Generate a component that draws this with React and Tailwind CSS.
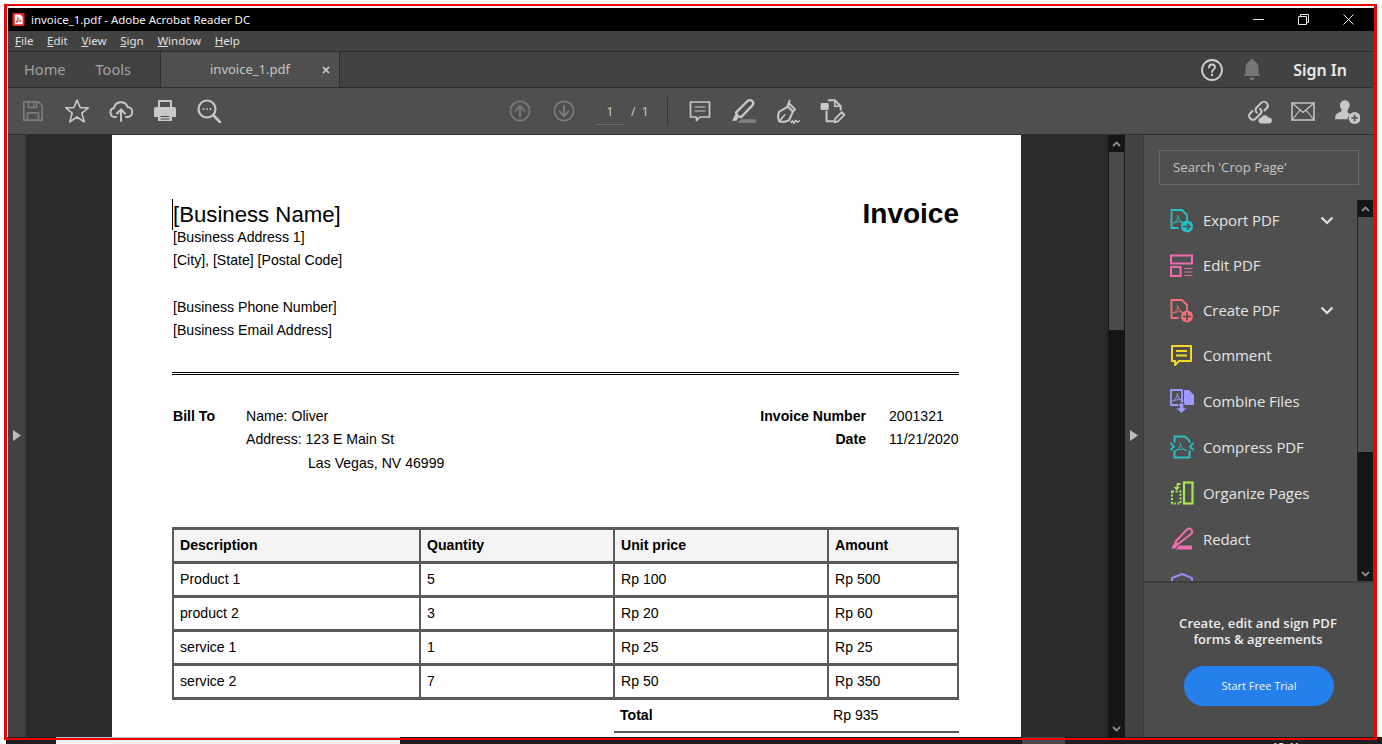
import React from 'react';

function Ico({ size = 24, className = '', children }) {
  return (
    <svg width={size} height={size} viewBox="0 0 24 24" fill="none" stroke="currentColor" strokeWidth="2" strokeLinejoin="round" strokeLinecap="round" className={className}>
      {children}
    </svg>
  );
}

const squiggle = 'M7.5 6.5c1 4 2.5 6 6 7.5M3.5 14c2-1 4-3.5 4.5-6M3.5 14c3-1.5 7-2 10-.5';

const toolIcons = {
  export: (
    <Ico className="text-[#27c0c8]">
      <path d="M8 19H1.5V1H12l5 5v5" strokeWidth="1.8" />
      <path d={squiggle} strokeWidth="1" />
      <circle cx="17" cy="17.5" r="6" fill="currentColor" stroke="none" />
      <path d="M13.5 17.5h6M17.5 15l2.5 2.5-2.5 2.5" stroke="#4f4f4f" strokeWidth="1.6" />
    </Ico>
  ),
  edit: (
    <Ico className="text-[#f06cb0]">
      <rect x="1" y="1.5" width="21" height="8" strokeWidth="2" strokeLinejoin="miter" />
      <rect x="1" y="13" width="9.5" height="9" strokeWidth="2" strokeLinejoin="miter" />
      <path d="M14.5 14.5h8M14.5 18h8M14.5 21.5h8" strokeWidth="1" strokeLinecap="butt" />
    </Ico>
  ),
  create: (
    <Ico className="text-[#f4707a]">
      <path d="M8 19H1.5V1H12l5 5v5" strokeWidth="1.8" />
      <path d={squiggle} strokeWidth="1" />
      <circle cx="17" cy="17.5" r="6" fill="currentColor" stroke="none" />
      <path d="M13.5 17.5h7M17 14v7" stroke="#4f4f4f" strokeWidth="1.6" />
    </Ico>
  ),
  comment: (
    <Ico className="text-[#f7d827]">
      <path d="M2 2h19v15H9l-4 4v-4H2z" strokeWidth="2" />
      <path d="M6 7h11M6 11.5h11" strokeWidth="2" strokeLinecap="butt" />
    </Ico>
  ),
  combine: (
    <Ico className="text-[#9a9aff]">
      <path d="M1 1h11v15H1z" strokeWidth="1.8" />
      <path d={squiggle} strokeWidth="1" transform="translate(-.5 -2)" />
      <path d="M14 1h5l5 5v10H14z" fill="currentColor" stroke="none" />
      <path d="M9 14h5v5h4l-6.5 5L5 19h4z" fill="currentColor" stroke="#4f4f4f" strokeWidth="1" />
    </Ico>
  ),
  compress: (
    <Ico className="text-[#27c0c8]">
      <path d="M4.5 7V1.5H15L19.5 6v1M4.5 16v6.5h15V16" strokeWidth="2" />
      <path d={squiggle} strokeWidth="1" transform="translate(2.5 1.5)" />
      <path d="M1 8.5l3 3-3 3M23 8.5l-3 3 3 3" strokeWidth="1.8" />
    </Ico>
  ),
  organize: (
    <Ico className="text-[#a8e650]">
      <rect x="14" y="1.5" width="8.5" height="21" strokeWidth="2.2" strokeLinejoin="miter" />
      <path d="M2 10.5h8.5v12H2z" strokeWidth="2" strokeDasharray="2 1.6" strokeLinecap="butt" strokeLinejoin="miter" />
      <path d="M10.5 3H7.5V7.5" strokeWidth="1.8" strokeLinecap="butt" />
      <path d="M3.5 6h6.5l-3.2 3.5z" fill="currentColor" stroke="none" />
    </Ico>
  ),
  redact: (
    <Ico className="text-[#f06cb0]">
      <path d="M7.5 17.5l-2-3L17 2.5c1.5-1.5 3.5-1 4.5.3s.7 3-.5 4.2z" strokeWidth="2" />
      <path d="M5 15l3 3-2.5 3.5H1z" fill="currentColor" stroke="none" />
      <path d="M9 18.5h13v4H6z" fill="currentColor" stroke="none" />
    </Ico>
  ),
  protect: (
    <Ico className="text-[#8f8ff5]">
      <path d="M2 5l10-4 10 4v10l-10 8L2 15z" strokeWidth="2" />
    </Ico>
  ),
};

const tools = [
  { name: 'Export PDF', icon: 'export', h: 'h-[45px]', more: true },
  { name: 'Edit PDF', icon: 'edit', h: 'h-[45px]' },
  { name: 'Create PDF', icon: 'create', h: 'h-[45px]', more: true },
  { name: 'Comment', icon: 'comment', h: 'h-[45px]' },
  { name: 'Combine Files', icon: 'combine', h: 'h-[46px]' },
  { name: 'Compress PDF', icon: 'compress', h: 'h-[46px]' },
  { name: 'Organize Pages', icon: 'organize', h: 'h-[46px]' },
  { name: 'Redact', icon: 'redact', h: 'h-[46px]' },
  { name: 'Protect', icon: 'protect', h: 'h-[46px]' },
];

function ToolBtn({ children }) {
  return <div className="w-[44px] h-full flex items-center justify-center shrink-0">{children}</div>;
}

function TopBars() {
  return (
    <>
      <div className="h-[23px] bg-black flex items-center text-[#f2f2f2] text-[11.45px] shrink-0">
        <svg width="13" height="15" viewBox="0 0 14 15" className="ml-[4px] mr-[6px]">
          <rect x="0.5" y="0.5" width="13" height="14" rx="1" fill="#e8261c" />
          <path d="M3 2h6l2.5 2.5V12.5H3z" fill="#fff" />
          <path d="M6.2 4.5c.4 2.5 1.5 4 3.6 4.5M4.2 10.5c1.2-1 2-2.5 2.3-4.3M4.2 10.5c1.8-1 3.8-1.5 5.6-1.5" stroke="#e8261c" strokeWidth="1" fill="none" />
        </svg>
        <span>invoice_1.pdf - Adobe Acrobat Reader DC</span>
        <div className="ml-auto flex items-center h-full text-[#e6e6e6]">
          <div className="w-[45px] flex justify-center">
            <svg width="11" height="11" viewBox="0 0 11 11" stroke="currentColor" fill="none"><path d="M0 5.5h11" /></svg>
          </div>
          <div className="w-[45px] flex justify-center">
            <svg width="11" height="11" viewBox="0 0 11 11" stroke="currentColor" fill="none"><path d="M.5 2.5h8v8h-8zM2.5 2.5v-2h8v8h-2" /></svg>
          </div>
          <div className="w-[45px] flex justify-center mr-[3px]">
            <svg width="11" height="11" viewBox="0 0 11 11" stroke="currentColor" fill="none"><path d="M.5.5l10 10M10.5.5l-10 10" /></svg>
          </div>
        </div>
      </div>

      <div className="h-[21px] bg-[#424242] border-b border-[#2f2f2f] flex items-center gap-[13.7px] pl-[7px] text-[11.5px] text-[#e0e0e0] shrink-0">
        {['File', 'Edit', 'View', 'Sign', 'Window', 'Help'].map((m) => (
          <span key={m}><u>{m[0]}</u>{m.slice(1)}</span>
        ))}
      </div>

      <div className="h-[36px] bg-[#424242] border-b border-[#2f2f2f] flex items-stretch shrink-0">
        <div className="flex items-center text-[14.6px] text-[#a3a3a3] pl-[16px] w-[152px] gap-[30px]">
          <span>Home</span>
          <span>Tools</span>
        </div>
        <div className="w-[180px] -mb-px bg-[#4f4f4f] border-x border-b border-[#2f2f2f] flex items-center text-[13px] text-[#c6c6c6] pl-[49px]">
          <span>invoice_1.pdf</span>
          <svg width="8" height="8" viewBox="0 0 8 8" stroke="#d0d0d0" strokeWidth="1.7" className="ml-auto mr-[9px]"><path d="M1 1l6 6M7 1l-6 6" /></svg>
        </div>
        <div className="ml-auto flex items-center pr-[27px]">
          <svg width="24" height="24" viewBox="0 0 24 24" fill="none" className="text-[#cfcfcf]">
            <circle cx="12" cy="12" r="10" stroke="currentColor" strokeWidth="1.8" />
            <path d="M9 9.5c0-1.8 1.3-3 3-3s3 1.2 3 2.8c0 2.3-3 2.4-3 4.7" stroke="currentColor" strokeWidth="1.8" strokeLinecap="round" />
            <circle cx="12" cy="17" r="1.2" fill="currentColor" />
          </svg>
          <svg width="20" height="22" viewBox="0 0 20 22" fill="#777" className="ml-[18px]">
            <path d="M10 0a2 2 0 0 1 2 2c3 1 4.5 3.5 4.5 7v5l2 3H1.5l2-3V9c0-3.5 1.500-6 4.500-7a2 2 0 0 1 2-2z" />
            <path d="M7.5 18.5h5a2.5 2.5 0 0 1-5 0z" />
          </svg>
          <span className="ml-[31px] text-[16px] font-semibold text-[#e8e8e8]">Sign In</span>
        </div>
      </div>

      <div className="h-[47px] bg-[#4f4f4f] border-b border-[#2f2f2f] flex items-center pl-[3px] pr-[5px] shrink-0">
        <ToolBtn>
          <Ico size={22} className="text-[#7c7c7c]">
            <path d="M2 2h16l4 4v16H2z" strokeWidth="1.8" />
            <path d="M7 2v6h9V2M6 22v-8h12v8M13 4v2" strokeWidth="1.8" />
          </Ico>
        </ToolBtn>
        <ToolBtn>
          <Ico size={26} className="text-[#c8c8c8]">
            <path d="M12 2l3 7h7.5l-6 5 2.2 8L12 17.5 5.3 22l2.2-8-6-5H9z" strokeWidth="1.5" />
          </Ico>
        </ToolBtn>
        <ToolBtn>
          <Ico size={24} className="text-[#c8c8c8]">
            <path d="M7 18H6a4.5 4.5 0 0 1-1-8.900A7 7 0 0 1 18.5 8 5 5 0 0 1 18 18h-1" strokeWidth="2" />
            <path d="M12 22V11M8 14.5L12 10.5l4 4" strokeWidth="2" />
          </Ico>
        </ToolBtn>
        <ToolBtn>
          <Ico size={24} className="text-[#c8c8c8]">
            <path d="M6 8V2h12v6" strokeWidth="2" />
            <path d="M3 8h18a2 2 0 0 1 2 2v8h-4v-3H5v3H1v-8a2 2 0 0 1 2-2z" fill="currentColor" stroke="none" />
            <path d="M5 14h14v8H5z" fill="currentColor" stroke="none" />
            <path d="M8 17.5h8M8 20h8" stroke="#4f4f4f" strokeWidth="1.2" />
          </Ico>
        </ToolBtn>
        <ToolBtn>
          <Ico size={24} className="text-[#c8c8c8]">
            <circle cx="10" cy="10" r="8.5" strokeWidth="2.2" />
            <path d="M16.5 16.5L23 23" strokeWidth="2.6" />
            <path d="M6.5 10h.1M10 10h.1M13.5 10h.1" strokeWidth="1.8" />
          </Ico>
        </ToolBtn>

        <div className="ml-[267px] flex items-center h-full">
          <ToolBtn>
            <Ico size={22} className="text-[#7c7c7c]">
              <circle cx="12" cy="12" r="10.5" strokeWidth="1.8" />
              <path d="M12 18V6.5M7 11.5l5-5 5 5" strokeWidth="2" />
            </Ico>
          </ToolBtn>
          <ToolBtn>
            <Ico size={22} className="text-[#7c7c7c]">
              <circle cx="12" cy="12" r="10.5" strokeWidth="1.8" />
              <path d="M12 6v11.5M7 12.5l5 5 5-5" strokeWidth="2" />
            </Ico>
          </ToolBtn>
          <div className="ml-[10px] w-[28px] h-[26px] border-b border-[#6c6c6c] flex items-center justify-center text-[12px] text-[#c8c8c8] self-center mt-[2px]">1</div>
          <span className="ml-[7px] w-[36px] text-[12px] text-[#c8c8c8] mt-[2px]">/&nbsp;&nbsp;1</span>
          <div className="h-[28px] border-l border-[#333] mr-[10px]" />
          <ToolBtn>
            <Ico size={24} className="text-[#c8c8c8]">
              <path d="M2.5 3h19v15H12l-3.500 3.500V18h-6z" strokeWidth="1.7" />
              <path d="M6.5 8h11M6.5 12h11" strokeWidth="1.2" strokeLinecap="butt" />
            </Ico>
          </ToolBtn>
          <ToolBtn>
            <Ico size={26} className="text-[#c8c8c8]">
              <path d="M6.5 17l-2-3.500L15 3c1.500-1.500 3.800-1.300 4.800 0s.8 3-.3 4L9.500 17.500z" strokeWidth="2.2" />
              <path d="M4 15l3 3-2 3H1z" fill="currentColor" stroke="none" />
              <path d="M9 19.500h14V23H6z" fill="#7f7f7f" stroke="none" />
            </Ico>
          </ToolBtn>
          <ToolBtn>
            <Ico size={26} className="text-[#c8c8c8]">
              <path d="M4 21.500c-1.500-3-1.500-6 0-9l8-4.500 4.500 4.500-3.500 8c-3 1.500-6 2-9 1z" strokeWidth="1.9" />
              <path d="M4 21.500l5-6" strokeWidth="1.500" />
              <path d="M11.500 8l2-5.500M13 5l5.500 5.500-2 2" strokeWidth="1.900" />
              <path d="M15 22.500c.8-2 1.300-2 1.800 0s1.200 0 1.700-1 1-1 1.300 0 1 1 2.700-.5" strokeWidth="1.400" />
            </Ico>
          </ToolBtn>
          <ToolBtn>
            <Ico size={26} className="text-[#c8c8c8]">
              <path d="M9 2h5.500l5.500 5.500v3M7 12.500v9h6" strokeWidth="1.900" />
              <path d="M14.500 2v5.500H20" strokeWidth="1.400" />
              <rect x="1.500" y="4.500" width="7.500" height="6.500" rx="1" fill="currentColor" stroke="none" />
              <path d="M14.500 22.500l.5-3.500 6-6 2.500 2.500-6 6z" strokeWidth="1.700" />
            </Ico>
          </ToolBtn>
        </div>

        <div className="ml-auto flex items-center h-full">
          <ToolBtn>
            <Ico size={26} className="text-[#c8c8c8]">
              <path d="M10 13.500c-1.500-1.500-1.500-3.500 0-5l4-4c1.500-1.500 3.500-1.500 5 0s1.500 3.500 0 5l-2 2" strokeWidth="1.900" />
              <path d="M13 10c1.500 1.500 1.500 3.500 0 5l-4 4c-1.500 1.500-3.500 1.500-5 0s-1.500-3.500 0-5l2-2" strokeWidth="1.900" />
              <path d="M13.500 23.500a2.800 2.800 0 0 1 .5-5.500 3.800 3.800 0 0 1 6.800 0 2.800 2.800 0 0 1 1 5.500z" fill="currentColor" stroke="none" />
            </Ico>
          </ToolBtn>
          <ToolBtn>
            <Ico size={24} className="text-[#c8c8c8]">
              <path d="M1 4h22v17H1z" strokeWidth="1.500" strokeLinejoin="miter" />
              <path d="M1 4l11 9.500L23 4M1 21l8-10M23 21l-8-10" strokeWidth="1.200" />
            </Ico>
          </ToolBtn>
          <ToolBtn>
            <Ico size={26} className="text-[#c8c8c8]">
              <path d="M10 2c3 0 4.500 2 4.500 4.500 0 2-1 3.500-2 4.500v2c0 .5 1 1 3 2-2 1-3 3-3 4.500H1c0-3.500 1-5 3-6 1.500-.7 3-1 3-2.500v-1C6 10 5.500 8.500 5.500 6.500 5.500 4 7 2 10 2z" fill="currentColor" stroke="none" />
              <circle cx="19" cy="18.500" r="5.500" fill="currentColor" stroke="none" />
              <path d="M16.500 18.500h5M19 16v5" stroke="#4f4f4f" strokeWidth="1.500" />
            </Ico>
          </ToolBtn>
        </div>
      </div>
    </>
  );
}

const rows = [
  ['Product 1', '5', 'Rp 100', 'Rp 500'],
  ['product 2', '3', 'Rp 20', 'Rp 60'],
  ['service 1', '1', 'Rp 25', 'Rp 25'],
  ['service 2', '7', 'Rp 50', 'Rp 350'],
];

function Invoice() {
  return (
    <div className="w-[909px] shrink-0 bg-white text-black pl-[60px] pr-[62px] font-['Liberation_Sans',Arial,sans-serif] text-[14.1px] overflow-hidden">
      <div className="flex justify-between items-start mt-[64px]">
        <div className="text-[22.2px] leading-[30px] border-l border-black pt-px">[Business Name]</div>
        <div className="text-[28px] leading-[30px] font-bold -ml-px">Invoice</div>
      </div>
      <div className="leading-[23.3px] pl-px">
        <div className="-mt-[4px]">[Business Address 1]</div>
        <div>[City], [State] [Postal Code]</div>
        <div className="mt-[23.5px]">[Business Phone Number]</div>
        <div>[Business Email Address]</div>
      </div>
      <div className="mt-[29px] h-[3px] border-y border-black" />

      <div className="mt-[30px] flex leading-[23.6px] pl-px">
        <div className="w-[73px] font-bold">Bill To</div>
        <div>
          <div>Name: Oliver</div>
          <div>Address: 123 E Main St</div>
          <div className="pl-[62px]">Las Vegas, NV 46999</div>
        </div>
        <div className="ml-auto text-right font-bold">
          <div>Invoice Number</div>
          <div>Date</div>
        </div>
        <div className="w-[70px] ml-[23px]">
          <div>2001321</div>
          <div>11/21/2020</div>
        </div>
      </div>

      <div className="mt-[52px] border-[3px] border-x-[2px] border-[#5a5a5a] w-[787px]">
        <div className="flex h-[34px] bg-[#f4f4f4] font-bold items-stretch border-b-[3px] border-[#5a5a5a]">
          <div className="w-[247px] pl-[6px] flex items-center border-r-[2px] border-[#5a5a5a]">Description</div>
          <div className="w-[194px] pl-[6px] flex items-center border-r-[2px] border-[#5a5a5a]">Quantity</div>
          <div className="w-[214px] pl-[6px] flex items-center border-r-[2px] border-[#5a5a5a]">Unit price</div>
          <div className="flex-1 pl-[6px] flex items-center">Amount</div>
        </div>
        {rows.map((r, i) => (
          <div key={r[0]} className={i < 3 ? 'flex h-[34px] items-stretch border-b-[3px] border-[#5a5a5a]' : 'flex h-[31px] items-stretch'}>
            <div className="w-[247px] pl-[6px] flex items-center border-r-[2px] border-[#5a5a5a]">{r[0]}</div>
            <div className="w-[194px] pl-[6px] flex items-center border-r-[2px] border-[#5a5a5a]">{r[1]}</div>
            <div className="w-[214px] pl-[6px] flex items-center border-r-[2px] border-[#5a5a5a]">{r[2]}</div>
            <div className="flex-1 pl-[6px] flex items-center">{r[3]}</div>
          </div>
        ))}
      </div>
      <div className="flex h-[33px] items-center border-b-[2px] border-[#5a5a5a] ml-[442px] w-[345px]">
        <div className="w-[219px] pl-[6px] font-bold">Total</div>
        <div>Rp 935</div>
      </div>
    </div>
  );
}

function Arrow({ dir }) {
  return (
    <svg width="9" height="9" viewBox="0 0 9 9" fill="none" stroke="#8a8a8a" strokeWidth="1.8" strokeLinecap="round" strokeLinejoin="round">
      <path d={dir === 'up' ? 'M1.5 6.5l3-3 3 3' : 'M1.5 2.5l3 3 3-3'} />
    </svg>
  );
}

function SidePanel() {
  return (
    <div className="w-[230px] shrink-0 flex flex-col bg-[#4f4f4f] font-['Open_Sans',sans-serif]">
      <div className="h-[65px] shrink-0 pt-[15px] pl-[15px]">
        <div className="w-[200px] h-[35px] border border-[#6a6a6a] flex items-center pl-[13px] text-[13.2px] text-[#c6c6c6]">Search 'Crop Page'</div>
      </div>
      <div className="h-[381px] shrink-0 flex overflow-hidden">
        <div className="flex-1 -mt-[2px] pl-[26px]">
          {tools.map((t) => (
            <div key={t.name} className={`${t.h} flex items-center`}>
              <div className="w-[33px] shrink-0">{toolIcons[t.icon]}</div>
              <span className="text-[15px] text-[#e4e4e4] tracking-[-0.1px]">{t.name}</span>
              {t.more && (
                <svg width="14" height="9" viewBox="0 0 14 9" fill="none" stroke="#e0e0e0" strokeWidth="2.2" className="ml-auto mr-[23px]"><path d="M1.5 1.5L7 7l5.5-5.500" /></svg>
              )}
            </div>
          ))}
        </div>
        <div className="w-[16px] mr-px bg-[#161616] flex flex-col shrink-0 border-l border-[#222]">
          <div className="h-[17px] flex items-center justify-center"><Arrow dir="up" /></div>
          <div className="h-[235px] bg-[#4f4f4f]" />
          <div className="flex-1 flex items-end justify-center pb-[2px]"><Arrow dir="down" /></div>
        </div>
      </div>
      <div className="flex-1 border-t-2 border-[#3e3e3e] bg-[#4c4c4c] flex flex-col items-center">
        <div className="mt-[32px] text-center text-[13.1px] font-semibold leading-[16px] text-[#ececec] -ml-[2px]">
          Create, edit and sign PDF<br />forms &amp; agreements
        </div>
        <div className="mt-[19px] w-[150px] h-[40px] rounded-full bg-[#2680eb] flex items-center justify-center text-[11px] text-[#f4f4f4]">Start Free Trial</div>
      </div>
    </div>
  );
}

export default function App() {
  return (
    <div className="relative w-[1382px] h-[744px] bg-white overflow-hidden font-['Noto_Sans',sans-serif]">
      <div className="ml-[8px] mt-[8px] w-[1366px] h-[729px] flex flex-col overflow-hidden bg-[#2a2a2a] absolute">
        <TopBars />
        <div className="flex-1 flex min-h-0 items-stretch">
          <div className="w-[18px] shrink-0 bg-[#434343] flex items-center justify-center border-r border-[#3a3a3a] pb-[2px]">
            <svg width="8" height="11" viewBox="0 0 8 11" fill="#bdbdbd"><path d="M0 0l8 5.5L0 11z" /></svg>
          </div>
          <div className="w-[86px] shrink-0 bg-[#2a2a2a]" />
          <Invoice />
          <div className="w-[87px] shrink-0 bg-[#2a2a2a]" />
          <div className="w-[17px] shrink-0 bg-[#161616] flex flex-col">
            <div className="h-[17px] flex items-center justify-center"><Arrow dir="up" /></div>
            <div className="h-[178px] mx-px bg-[#4a4a4a]" />
            <div className="flex-1 flex items-end justify-center pb-[3px]"><Arrow dir="down" /></div>
          </div>
          <div className="w-[19px] shrink-0 bg-[#434343] border-r border-[#3a3a3a] flex items-center justify-center pb-[2px]">
            <svg width="8" height="11" viewBox="0 0 8 11" fill="#bdbdbd"><path d="M0 0l8 5.5L0 11z" /></svg>
          </div>
          <SidePanel />
        </div>
      </div>

      {/* taskbar peeking out under the window */}
      <div className="absolute left-[6px] top-[737px] w-[1376px] h-[7px] bg-[#1e1e1e] flex text-white text-[11px] overflow-hidden">
        <div className="w-[50px]" />
        <div className="w-[344px] bg-[#f2f2f2] border-t border-[#bbb]" />
        <div className="w-[622px]" />
        <div className="w-[43px] bg-[#4a4a4a]" />
        <div className="ml-[207px] leading-[20px]">13:41</div>
      </div>

      {/* red selection frame drawn over the capture */}
      <div className="absolute left-[4px] top-[4px] w-[1373px] h-[736px] border-x-[3px] border-y-2 border-[#ee0000] pointer-events-none" />
    </div>
  );
}
